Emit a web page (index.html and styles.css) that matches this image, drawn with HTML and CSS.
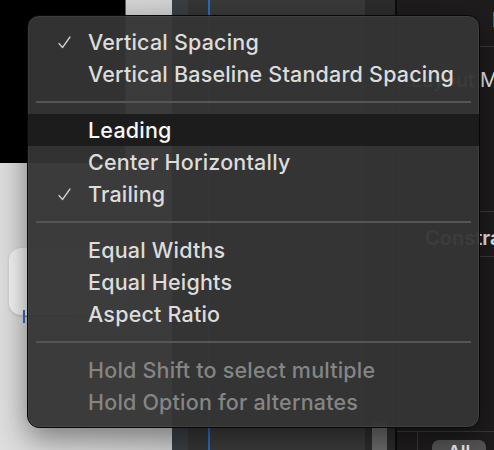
FILE: index.html
```html
<!DOCTYPE html>
<html>
<head>
<meta charset="utf-8">
<link rel="stylesheet" href="styles.css">
</head>
<body>
<div class="scene">
  <div class="canvas">
    <div class="dark-view"></div>
    <div class="card"></div>
    <div class="handle"></div>
    <div class="handle-line"></div>
  </div>
  <div class="col col-a"></div>
  <div class="col col-b"></div>
  <div class="col col-blue"></div>
  <div class="col col-c"></div>
  <div class="col col-d"><div class="thumb"></div></div>
  <div class="col col-sep"></div>
  <div class="inspector">
    <div class="ins-top"><span class="ins-peek">I</span></div>
    <div class="ins-layout"><span>Layout Margins</span></div>
    <div class="ins-head"><span>Constraints</span></div>
    <div class="ins-body"></div>
    <div class="ins-bottom">
      <div class="ins-tab"></div>
      <div class="all-btn">All</div>
    </div>
  </div>
</div>

<div class="menu">
  <div class="item"><svg class="check" viewBox="0 0 13 13"><polyline points="1,7.5 4.5,11.5 12,1"/></svg>Vertical Spacing</div>
  <div class="item">Vertical Baseline Standard Spacing</div>
  <div class="sep"></div>
  <div class="item active">Leading</div>
  <div class="item">Center Horizontally</div>
  <div class="item"><svg class="check" viewBox="0 0 13 13"><polyline points="1,7.5 4.5,11.5 12,1"/></svg>Trailing</div>
  <div class="sep"></div>
  <div class="item">Equal Widths</div>
  <div class="item">Equal Heights</div>
  <div class="item">Aspect Ratio</div>
  <div class="sep"></div>
  <div class="item disabled">Hold Shift to select multiple</div>
  <div class="item disabled">Hold Option for alternates</div>
</div>
</body>
</html>
```

FILE: styles.css
```css
html, body {
  margin: 0;
  padding: 0;
}
body {
  width: 494px;
  height: 450px;
  overflow: hidden;
  position: relative;
  font-family: "Inter", "Noto Sans", sans-serif;
  background: #1e1c1d;
}

.scene {
  display: flex;
  height: 450px;
}

.canvas {
  position: relative;
  width: 172px;
  flex: none;
  background: linear-gradient(90deg, #dedede 0%, #d2d2d2 100%);
  overflow: hidden;
}
.dark-view {
  width: 125px;
  height: 163px;
  background: #000;
  border-right: 1px solid #2c6cc0;
}
.card {
  position: absolute;
  left: 9px;
  top: 248px;
  width: 120px;
  height: 67px;
  border-radius: 12px;
  background: #f3f3f3;
  box-shadow: 0 1px 3px rgba(0,0,0,0.15);
}
.handle {
  position: absolute;
  left: 23px;
  top: 310px;
  width: 2px;
  height: 13px;
  background: #2d6fc4;
}
.handle-line {
  position: absolute;
  left: 25px;
  top: 316px;
  width: 50px;
  height: 1px;
  background: #8a8a8a;
}

.col { flex: none; height: 450px; }
.col-a { width: 16px; background: #3a3f44; }
.col-b { width: 20px; background: #353535; }
.col-blue { width: 2px; background: #2b6cc2; }
.col-c { width: 155px; background: #3a3a3a; }
.col-d {
  width: 30px;
  background: #2c2c2c;
  display: flex;
  flex-direction: column;
  justify-content: flex-end;
  padding-left: 7px;
  box-sizing: border-box;
}
.thumb {
  width: 15px;
  height: 28px;
  background: #6a6a6a;
}
.col-sep { width: 2px; background: #0c0c0c; }

.inspector {
  flex: 1;
  background: #1e1c1d;
  display: flex;
  flex-direction: column;
  color: #ececec;
  font-size: 20px;
  white-space: nowrap;
  overflow: hidden;
}
.inspector > div { flex: none; }
.ins-top {
  height: 47px;
  border-bottom: 1px solid #3a3a3a;
  padding-left: 95px;
  padding-top: 8px;
  box-sizing: border-box;
  line-height: 24px;
}
.ins-layout {
  height: 165px;
  border-bottom: 1px solid #3a3a3a;
  padding: 21px 0 0 14px;
  box-sizing: border-box;
  line-height: 24px;
}
.ins-head {
  height: 45px;
  border-bottom: 1px solid #3a3a3a;
  padding-left: 28px;
  padding-top: 7px;
  box-sizing: border-box;
  display: flex;
  align-items: center;
  font-weight: 600;
}
.ins-body {
  height: 175px;
  border-bottom: 1px solid #3a3a3a;
  box-sizing: border-box;
}
.inspector > .ins-bottom {
  flex: 1 1 auto;
  min-height: 0;
  display: flex;
  align-items: flex-start;
}
.ins-tab {
  width: 20px;
  height: 30px;
  border-right: 1px solid #3a3a3a;
}
.all-btn {
  margin-left: 14px;
  margin-top: 8px;
  width: 54px;
  height: 26px;
  border-radius: 7px;
  background: #555;
  color: #f0f0f0;
  font-size: 18px;
  font-weight: 600;
  text-align: center;
  line-height: 26px;
}

.menu {
  position: absolute;
  left: 27px;
  top: 15px;
  width: 453px;
  height: 413px;
  box-sizing: border-box;
  padding-top: 10px;
  border: 1px solid #080808;
  border-radius: 12px;
  background: rgba(52, 52, 52, 0.96);
  box-shadow: inset 0 0 0 1px rgba(255,255,255,0.06), 0 10px 30px rgba(0,0,0,0.45);
  overflow: hidden;
  font-family: "Inter", "Noto Sans", sans-serif;
  font-size: 21.5px;
  font-weight: 500;
  letter-spacing: 0.2px;
}
.item {
  position: relative;
  height: 32px;
  line-height: 32px;
  padding-left: 60px;
  color: #dcdcdc;
  white-space: nowrap;
}
.item.active {
  background: #1c1c1c;
  color: #f6f6f6;
}
.item.disabled {
  color: #858585;
}
.check {
  position: absolute;
  left: 30px;
  top: 10px;
  width: 13px;
  height: 13px;
  fill: none;
  stroke: #cfcfcf;
  stroke-width: 1.3;
  stroke-linecap: round;
  stroke-linejoin: round;
}
.sep {
  height: 2px;
  margin: 11px 8px;
  background: #555;
}
```
